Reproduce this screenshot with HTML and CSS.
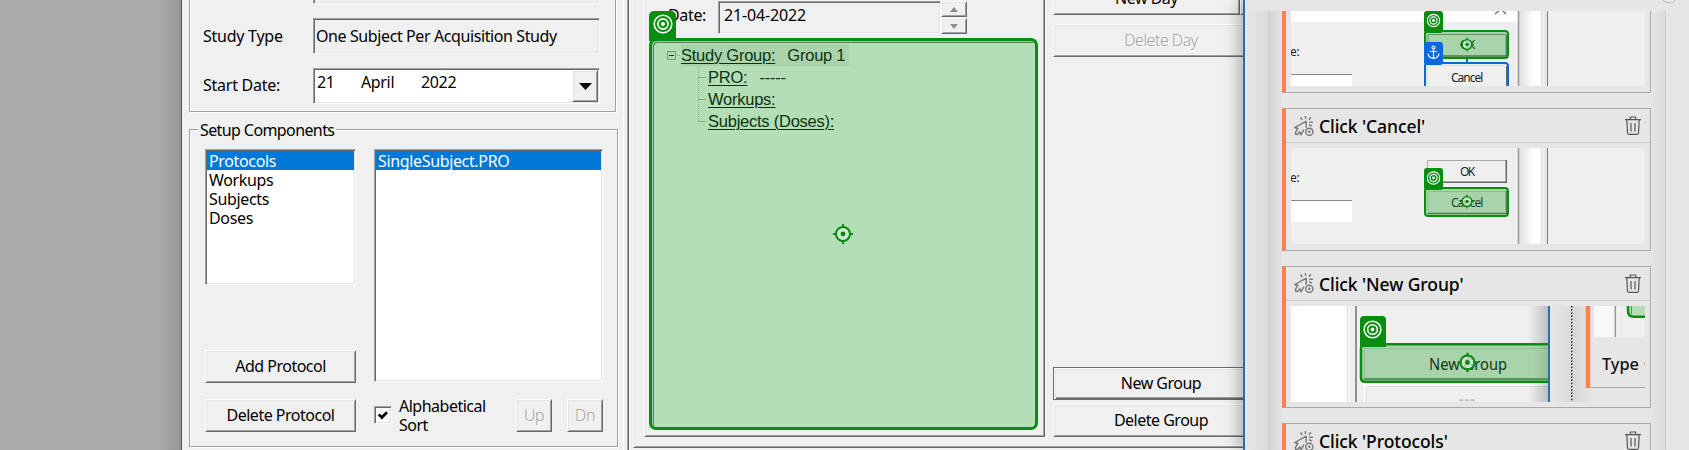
FILE: index.html
```html
<!DOCTYPE html>
<html lang="en">
<head>
<meta charset="utf-8">
<title>Study setup</title>
<link rel="stylesheet" href="styles.css">
</head>
<body>
<svg width="0" height="0" class="defs">
  <defs>
    <symbol id="rings" viewBox="0 0 20 20"><g fill="none" stroke="#fff" stroke-width="1.6"><circle cx="10" cy="10" r="8.8"/><circle cx="10" cy="10" r="5.1"/></g><circle cx="10" cy="10" r="2" fill="#fff"/></symbol>
    <symbol id="aim" viewBox="0 0 20 20"><circle cx="10" cy="10" r="7" fill="#d9eeda" fill-opacity=".75" stroke="#068a10" stroke-width="2"/><circle cx="10" cy="10" r="2.4" fill="#068a10"/><path d="M10 0v4M10 16v4M0 10h4M16 10h4" stroke="#068a10" stroke-width="2"/></symbol>
    <symbol id="trash" viewBox="0 0 16 19"><g fill="none" stroke="#555" stroke-width="1.2"><path d="M0 3.6h16M5.3 3.4V1h5.4v2.4M1.8 3.8l.7 13q.1 1.5 1.4 1.5h8.2q1.3 0 1.4-1.5l.7-13M6 7v8.5M10 7v8.5"/></g></symbol>
    <symbol id="click" viewBox="0 0 20 20"><g fill="none" stroke="#777" stroke-width="1.4"><path d="M12.3 5.2L.8 11.5l3 1-2.400 4.200.4 1.600 1.800.2 2.200-2.500 1.200 2.600 3-5M12.300 5.200l-.2 6.500"/><circle cx="15.300" cy="15.800" r="3.600"/><path d="M6.500 1.500l1.800 2.500M11.500 0v3M16.800 1.300l-2 2.600M15.300 6.300h3.600M15 8.600l3 1.600"/></g><circle cx="15.300" cy="15.800" r="1.200" fill="#777"/></symbol>
    <linearGradient id="fade"><stop offset="0" stop-color="#dcdcdc"/><stop offset=".65" stop-color="#fff"/></linearGradient>
    <linearGradient id="edge"><stop offset="0" stop-color="#000" stop-opacity="0"/><stop offset="1" stop-color="#000" stop-opacity=".2"/></linearGradient>
    <linearGradient id="trough"><stop offset="0" stop-color="#e6e6e6"/><stop offset=".55" stop-color="#d8d8d8"/><stop offset="1" stop-color="#e4e4e4"/></linearGradient>
  </defs>
</svg>
<main class="screen">
  <div class="desktop"></div>

  <section class="setup">
    <div class="box details">
      <span></span><div class="field"></div>
      <span class="label">Study Type</span><div class="field type">One Subject Per Acquisition Study</div>
      <span class="label start">Start Date:</span>
      <div class="field date"><span class="d1">21</span><span class="d2">April</span><span class="d3">2022</span><div class="btn drop"><svg width="13" height="7" viewBox="0 0 13 7"><path d="M0 0h13L6.500 7z"/></svg></div></div>
    </div>
    <div class="box components">
      <span class="legend">Setup Components</span>
      <div class="col">
        <div class="list kinds"><div class="sel">Protocols</div><div>Workups</div><div>Subjects</div><div>Doses</div></div>
        <div class="btn wide">Add Protocol</div>
        <div class="btn wide">Delete Protocol</div>
      </div>
      <div class="col">
        <div class="list files"><div class="sel">SingleSubject.PRO</div></div>
        <div class="sort">
          <span class="check"><svg width="10" height="9" viewBox="0 0 10 9"><path d="M.8 3.500l3 3L9 1.200" fill="none" stroke="#000" stroke-width="2.700"/></svg></span>
          <span class="sorttext">Alphabetical<br>Sort</span>
          <div class="btn small off">Up</div><div class="btn small off">Dn</div>
        </div>
      </div>
    </div>
  </section>

  <section class="schedule">
    <div class="frame">
      <div class="day">
        <div class="dayrow">
          <span class="daylabel">Date:</span><div class="field dayfield">21-04-2022</div>
          <div class="spin"><div class="btn"><svg width="8" height="5" viewBox="0 0 8 5"><path d="M0 5h8L4 0z" fill="#8e8e8e"/></svg></div><div class="btn"><svg width="8" height="5" viewBox="0 0 8 5"><path d="M0 0h8L4 5z" fill="#8e8e8e"/></svg></div></div>
        </div>
        <div class="target">
          <div class="tab"><svg width="20" height="20"><use href="#rings"/></svg></div>
          <ul class="tree">
            <li class="root"><svg class="toggle" width="14" height="9"><path d="M.5.5h8v8h-8z" fill="none" stroke="#6f9b72"/><path d="M2 4.500h5" stroke="#123d16"/><path d="M10 4.500h4" stroke="#7da880" stroke-dasharray="1 1"/></svg><span class="hl"><u>Study Group:</u><span class="value">Group 1</span></span></li>
            <li><u>PRO:</u><span class="value">-----</span></li>
            <li><u>Workups:</u></li>
            <li><u>Subjects (Doses):</u></li>
          </ul>
          <svg class="aim" width="20" height="20"><use href="#aim"/></svg>
        </div>
      </div>
      <div class="actions">
        <div class="newday"><div class="btn">New Day</div><div class="btn next"></div></div>
        <div class="btn act off">Delete Day</div>
        <div class="btn act default">New Group</div>
        <div class="btn act">Delete Group</div>
      </div>
    </div>
  </section>

  <aside class="recorder">
    <div class="toolbar"><span class="knob"></span></div>
    <div class="scroll">
      <div class="shade left"></div>
      <div class="cards">
        <article class="card first">
          <svg class="shot" width="354" height="75" viewBox="1291 11 354 75">
            <path d="M1291 11h354v75h-354z" fill="#efefef"/><path d="M1291 11h227v11h-227z" fill="#fff"/>
            <path d="M1495 14l6-5 5 5" fill="none" stroke="#666" stroke-width="1.200"/>
            <text x="1290" y="56" class="tiny">e:</text>
            <path d="M1291 74h61v12h-61z" fill="#fff"/><path d="M1291 74.500h61" stroke="#888"/>
            <path d="M1518 11h24v75h-24z" fill="url(#fade)"/><path d="M1518.500 11v75" stroke="#999" stroke-width="1.500"/><path d="M1541.500 11v75M1545.500 11v75" stroke="#ddd"/><path d="M1547.500 11v75" stroke="#777"/>
            <rect x="1425" y="31" width="83" height="27" rx="3" fill="#a9d3aa" stroke="#078d0f" stroke-width="2"/>
            <path d="M1428 56V34.500h78" fill="none" stroke="#61955f"/><path d="M1428 56h78.500V35" fill="none" stroke="#477b49" stroke-width="1.500"/>
            <text x="1460" y="49" textLength="15" class="tiny green">OK</text><use href="#aim" x="1460" y="37.500" width="14" height="14"/>
            <rect x="1424" y="11" width="19" height="22" rx="3" fill="#078d0f"/><use href="#rings" x="1426.500" y="13.500" width="14" height="14"/>
            <path d="M1467 59v4" stroke="#0868dd" stroke-width="2"/>
            <rect x="1425" y="63" width="83" height="40" rx="3" fill="#efefef" stroke="#0868dd" stroke-width="2"/><path d="M1427.500 86V65.500h78" fill="none" stroke="#ddd"/><path d="M1506.500 66v20" stroke="#666"/>
            <rect x="1424" y="42" width="19" height="23" rx="3" fill="#0868dd"/>
            <g fill="none" stroke="#fff" stroke-width="1.200"><circle cx="1433.500" cy="47.500" r="1.500"/><path d="M1433.500 49v9M1430 51.500h7M1428 53.500q.5 4.500 5.500 4.800 5-.3 5.500-4.800"/></g>
            <text x="1451" y="81.500" textLength="32" class="tiny">Cancel</text>
          </svg>
        </article>
        <article class="card">
          <header><svg width="20" height="20"><use href="#click"/></svg><h2>Click 'Cancel'</h2><svg width="16" height="19"><use href="#trash"/></svg></header>
          <svg class="shot" width="354" height="96" viewBox="1291 148 354 96">
            <path d="M1291 148h354v96h-354z" fill="#efefef"/>
            <text x="1290" y="182" class="tiny">e:</text>
            <path d="M1291 200h61v22h-61z" fill="#fff"/><path d="M1291 200.500h61" stroke="#888"/>
            <path d="M1518 148h24v96h-24z" fill="url(#fade)"/><path d="M1518.500 148v96" stroke="#999" stroke-width="1.500"/><path d="M1541.500 148v96M1545.500 148v96" stroke="#ddd"/><path d="M1547.500 148v96" stroke="#777"/>
            <path d="M1427.500 182V160.500h79" fill="none" stroke="#aaa"/><path d="M1427 182.300h79.300V160" fill="none" stroke="#666" stroke-width="1.500"/>
            <text x="1460" y="175.500" textLength="15" class="tiny">OK</text>
            <rect x="1425" y="188" width="83" height="28" rx="3" fill="#a9d3aa" stroke="#078d0f" stroke-width="2"/>
            <path d="M1428 214V191.500h78" fill="none" stroke="#8dbc8e"/><path d="M1428 213.500h78.500V191" fill="none" stroke="#477b49" stroke-width="1.500"/>
            <text x="1451" y="207" textLength="32" class="tiny green">Cancel</text><use href="#aim" x="1460" y="194.500" width="14" height="14"/>
            <rect x="1424" y="168" width="19" height="22" rx="3" fill="#078d0f"/><use href="#rings" x="1426.500" y="171" width="14" height="14"/>
          </svg>
        </article>
        <article class="card">
          <header><svg width="20" height="20"><use href="#click"/></svg><h2>Click 'New Group'</h2><svg width="16" height="19"><use href="#trash"/></svg></header>
          <svg class="shot" width="354" height="96" viewBox="1291 305 354 96">
            <path d="M1291 305h354v96h-354z" fill="#efefef"/><path d="M1291 305h56v96h-56z" fill="#fff"/><path d="M1347.500 305v96" stroke="#ddd"/><path d="M1349 305v96" stroke="#fff"/><path d="M1356 305v96" stroke="#909090" stroke-width="2"/>
            <path d="M1365 401v-17h183" fill="none" stroke="#fff" stroke-width="2"/><path d="M1366 401v-15.500h182" fill="none" stroke="#ddd"/><path d="M1459 399.200h16" stroke="#c5c5c5" stroke-width="2" stroke-dasharray="4.500 1.200"/>
            <path d="M1528 305h20v96h-20z" fill="url(#edge)"/>
            <path d="M1550 343.200H1365q-4 0-4 4v29.500q0 4 4 4h185" fill="#a9d3aa" stroke="#078d0f" stroke-width="2.500"/>
            <path d="M1364.500 377V347.500h184" fill="none" stroke="#92bf93"/><path d="M1364 378h184" stroke="#477b49" stroke-width="1.500"/>
            <path d="M1533 345h15v32h-15z" fill="url(#edge)" opacity=".5"/>
            <text x="1429" y="368.500" textLength="78" lengthAdjust="spacingAndGlyphs" class="mid">New Group</text><use href="#aim" x="1457.500" y="351.500" width="20" height="20"/>
            <path d="M1360 343v-24q0-4 4-4h18q4 0 4 4v24v3h-26z" fill="#078d0f"/><use href="#rings" x="1363" y="319" width="19" height="19"/>
            <path d="M1549 305h96v96h-96z" fill="#e6e6e6"/><path d="M1549 305v96" stroke="#2470b8" stroke-width="2"/>
            <path d="M1553 305h38v96h-38z" fill="url(#trough)"/><path d="M1571.700 305v96" stroke="#222" stroke-width="1.400" stroke-dasharray="1.500 1.700"/>
            <path d="M1588 305v82" stroke="#ff7f50" stroke-width="4.500"/><path d="M1590 386.500h55" stroke="#aaa"/>
            <path d="M1594 305h51v31h-51z" fill="#efefef"/><path d="M1594 305h21v31h-21z" fill="#f8f8f8"/><path d="M1615.300 305v31" stroke="#999" stroke-width="1.500"/>
            <path d="M1645 315.800h-11q-6 0-6-6V305h17z" fill="#b4deb6"/><path d="M1645 315.800h-11q-6 0-6-6V305" fill="none" stroke="#078d0f" stroke-width="2.500"/><path d="M1631.500 305v8" stroke="#5f8a62"/>
            <text x="1602" y="369" textLength="37" lengthAdjust="spacingAndGlyphs" class="mid bold">Type</text><path d="M1644.500 361v3" stroke="#f0a860"/>
          </svg>
        </article>
        <article class="card">
          <header><svg width="20" height="20"><use href="#click"/></svg><h2>Click 'Protocols'</h2><svg width="16" height="19"><use href="#trash"/></svg></header>
        </article>
      </div>
      <div class="shade right"></div>
    </div>
  </aside>
</main>
</body>
</html>
```
FILE: styles.css
```css
* { box-sizing: border-box; }
body { margin: 0; overflow: hidden; background: #f0f0f0; color: #000; font: 16px/19px "Noto Sans", "Open Sans", sans-serif; letter-spacing: -.35px; white-space: nowrap; }
svg { display: block; flex: none; }
.defs { position: absolute; }
.screen { display: grid; grid-template-columns: 181px 448px 614px 446px; height: 450px; overflow: hidden; }
.desktop { background: linear-gradient(90deg, #ababab 160px, #949494); }

/* raised and sunken bevels */
.btn { display: flex; align-items: center; justify-content: center; letter-spacing: -.5px; background: #f0f0f0; border: 1px solid; border-color: #fff #696969 #696969 #fff; box-shadow: inset 1px 1px #e3e3e3, inset -1px -1px #a0a0a0; }
.field, .list, .check { border: 1px solid; border-color: #a0a0a0 #fff #fff #a0a0a0; box-shadow: inset 1px 1px #696969, inset -1px -1px #e3e3e3; }
.off { color: #a0a0a0; text-shadow: 1px 1px #fff; font-weight: 300; }
.box { border: 1px solid #a0a0a0; box-shadow: 1px 1px #fff, inset 1px 1px #fff; }

.setup { padding-left: 7px; border-left: 1px solid #555; border-right: 1px solid #696969; box-shadow: inset -1px 0 #a0a0a0, inset -4px 0 #f0f0f0, inset -5px 0 #fff; height: 450px; overflow: hidden; }
.details { display: grid; grid-template-columns: 110px 287px; grid-auto-rows: 36px; row-gap: 14px; width: 427px; height: 149px; margin-top: -37px; padding: 4px 0 0 13px; }
.label { align-self: center; letter-spacing: -.25px; }
.start { padding-bottom: 2px; }
.field { height: 36px; }
.type { padding: 8px 0 0 2px; letter-spacing: -.4px; }
.date { display: flex; background: #fff; padding: 1px 1px 1px 3px; }
.d1, .d2, .d3 { margin-top: 3px; }
.d1 { width: 44px; } .d2 { width: 60px; } .d3 { flex: 1; }
.drop { width: 26px; }

.components { display: flex; gap: 18px; width: 429px; height: 318px; margin-top: 17px; padding: 19px 0 0 15px; position: relative; }
.legend { position: absolute; left: 8px; top: -9px; padding: 0 2px; background: #f0f0f0; letter-spacing: -.6px; }
.list { background: #fff; padding: 1px 1px 0; }
.list div { height: 19px; padding-left: 2px; line-height: 21px; }
.list .sel { background: #0078d7; color: #fff; }
.kinds { width: 151px; height: 136px; margin-bottom: 65px; }
.files { width: 229px; height: 233px; margin-bottom: 17px; }
.wide { width: 151px; height: 33px; margin-bottom: 16px; }
.sort { display: flex; width: 229px; }
.check { display: grid; place-items: center; width: 18px; height: 18px; margin-top: 7px; background: #fff; }
.sorttext { width: 124px; padding-left: 7px; margin-top: -2px; letter-spacing: -.5px; }
.small { width: 36px; height: 33px; }
.small + .small { margin-left: 15px; }

.schedule { padding-left: 4px; height: 450px; overflow: hidden; }
.frame { display: flex; width: 630px; height: 458px; margin-top: -10px; border: 1px solid; border-color: #fff #696969 #696969 #fff; box-shadow: inset 1px 0 #e3e3e3, inset 0 -1px #a0a0a0; padding-left: 10px; }
.day { flex: none; width: 401px; height: 446px; padding: 9px 0 0 4px; border: 1px solid; border-color: #fff #696969 #696969 #fff; box-shadow: inset 1px 0 #e3e3e3, inset -1px -1px #a0a0a0; }
.dayrow { display: flex; height: 37px; }
.daylabel { margin-left: 19px; width: 50px; margin-top: 5px; }
.dayfield { width: 223px; height: 33px; padding: 4px 0 0 5px; letter-spacing: -.15px; }
.spin { display: flex; flex-direction: column; gap: 1px; width: 26px; }
.spin .btn { height: 16px; }
.target { position: relative; width: 389px; height: 392px; border: 3px solid #078d0f; border-radius: 7px; background: #b4deb6; box-shadow: inset 1px 1px #96c798, inset 2px 2px #5a875d; }
.tab { position: absolute; left: -3px; top: -30px; width: 27px; height: 30px; padding: 3px 0 0 4px; border-radius: 5px 5px 0 0; background: #078d0f; }
.aim { position: absolute; left: 181px; top: 183px; }
.tree { list-style: none; margin: 0; padding: 3px 0 0 15px; font: 16.500px/22px "Liberation Sans", sans-serif; letter-spacing: -.24px; color: #0b3311; }
.tree li { height: 22px; padding-left: 41px; background: linear-gradient(90deg, #83ad86, #83ad86) 31px 11px / 8px 1px no-repeat, repeating-linear-gradient(#83ad86 0 1px, transparent 1px 2px) 31px 0 / 1px 100% no-repeat; }
.tree li:last-child { background-size: 8px 1px, 1px 11px; }
.tree .root { display: flex; padding: 0; background: none; }
.toggle { margin-top: 7px; }
.hl { width: 168px; background: #aad3ac; }
.tree u { text-decoration-thickness: 1px; text-underline-offset: 2px; }
.value { margin-left: 12px; }

.actions { flex: 1; margin-left: 8px; padding-top: 0; }
.newday { display: flex; height: 33px; }
.newday .btn { flex: none; width: 187px; height: 33px; margin-top: -9px; }
.act { width: 246px; height: 33px; padding-right: 30px; }
.act.default { margin: 310px 0 4px; border-color: #696969; box-shadow: inset 1px 1px #fff, inset 2px 2px #e3e3e3, inset 0 -1px #696969, inset 0 -2px #a0a0a0; }

.recorder { position: relative; z-index: 1; background: #e6e6e6; border-left: 2px solid #2470b8; box-shadow: -5px 0 14px rgba(0, 0, 0, .25); }
.toolbar { height: 11px; overflow: hidden; }
.knob { display: block; width: 20px; height: 20px; margin: -17px 0 0 414px; border: 1px solid #bbb; border-radius: 50%; background: #eee; }
.scroll { display: flex; height: 439px; overflow: hidden; }
.left { width: 37px; background: linear-gradient(90deg, #e6e6e6, #dcdcdc 22px, #d3d3d3 23px, #e3e3e3); }
.cards { width: 369px; }
.right { width: 15px; background: linear-gradient(90deg, #e6e6e6, #dadada 14px, #cfcfcf 14px); }
.card { height: 142.500px; margin-bottom: 15px; border: 1px solid #aaa; border-left: 4.500px solid #ff7f50; }
.card.first { height: 82px; border-top: 0; }
.card header { display: flex; align-items: center; height: 34px; padding: 0 9px 0 8px; border-bottom: 1px solid #ccc; }
h2 { flex: 1; margin: 1px 0 0 5px; font: 500 17.500px/24px "Noto Sans", "Open Sans", sans-serif; letter-spacing: -.08px; }
.shot { margin: 5px 0 0 4.500px; }
.first .shot { margin-top: 0; }
.tiny { font-size: 12px; letter-spacing: -.3px; fill: #222; }
.green { fill: #16451a; }
.mid { font-size: 16px; fill: #16351a; letter-spacing: 0; }
.bold { font-weight: 500; fill: #111; }
```
